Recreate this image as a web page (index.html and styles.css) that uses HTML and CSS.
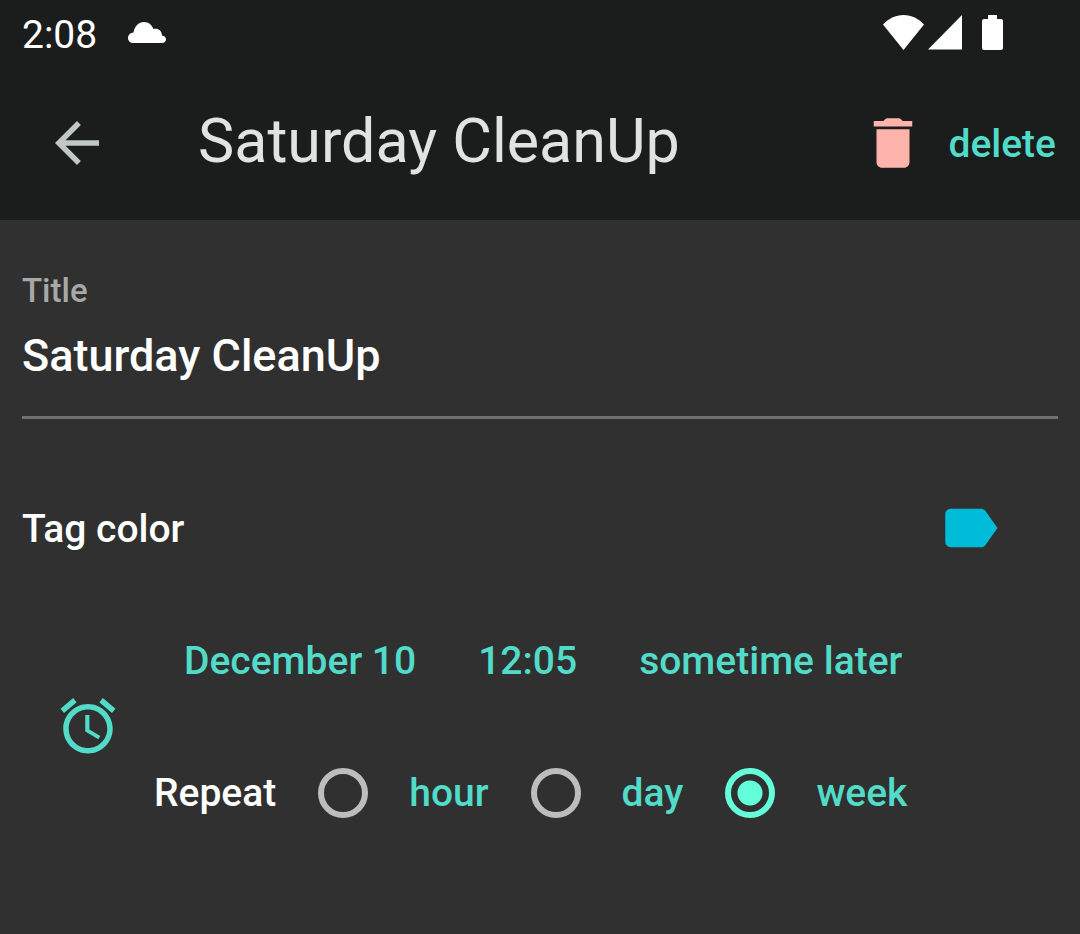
FILE: index.html
```html
<!DOCTYPE html>
<html lang="en">
<head>
<meta charset="utf-8">
<meta name="viewport" content="width=device-width, initial-scale=1">
<title>Saturday CleanUp</title>
<link rel="stylesheet" href="styles.css">
</head>
<body>
<header class="top">
  <div class="status">
    <span class="clock">2:08</span>
    <svg class="cloud" viewBox="0 0 38 21" aria-hidden="true"><path d="M5 21C2.200 21 0 18.800 0 16C0 13.200 2.300 10.600 5.500 10.500C6.500 4.500 10.500 0 16 0C20.500 0 24 2.800 25.400 7C30.500 6.200 33.800 9 34 13.500C36.500 13.800 38 15.300 38 17.300C38 19.400 36.300 21 34 21Z"/></svg>
    <div class="signals">
      <svg class="wifi" viewBox="0 0 41 35" aria-hidden="true"><path d="M0 9.500C5.500 3.700 12.500 0 20.500 0S35.500 3.700 41 9.500L20.500 35Z"/></svg>
      <svg class="cell" viewBox="0 0 35 35" aria-hidden="true"><path d="M34 0V34.500H0Z"/></svg>
      <svg class="battery" viewBox="0 0 21 36" aria-hidden="true"><path d="M6 1H15V5H19Q21 5 21 7V34Q21 36 19 36H2Q0 36 0 34V7Q0 5 2 5H6Z"/></svg>
    </div>
  </div>
  <div class="appbar">
    <button class="icon-button back" type="button" aria-label="Back">
      <svg class="icon" viewBox="0 0 24 24" aria-hidden="true"><path d="M20 11H7.830l5.590-5.590L12 4l-8 8 8 8 1.410-1.410L7.830 13H20v-2z"/></svg>
    </button>
    <h1 class="heading">Saturday CleanUp</h1>
    <button class="delete" type="button">
      <svg class="icon bin" viewBox="0 0 24 24" aria-hidden="true"><path d="M6 19c0 1.100.9 2 2 2h8c1.100 0 2-.9 2-2V7H6v12zM19 4h-3.500l-.71-.71c-.18-.18-.44-.29-.7-.29H9.910c-.26 0-.52.11-.7.290L8.500 4H5v2h14V4z"/></svg>
      <span class="delete-text">delete</span>
    </button>
  </div>
</header>
<main class="form">
  <div class="field">
    <label class="field-label" for="title">Title</label>
    <input class="field-input" id="title" type="text" value="Saturday CleanUp">
  </div>
  <div class="tag-row">
    <span class="tag-label" id="tag-label">Tag color</span>
    <button class="icon-button tag" type="button" aria-labelledby="tag-label">
      <svg class="icon" viewBox="0 0 24 24" aria-hidden="true"><path d="M17.630 5.840C17.270 5.330 16.670 5 16 5L5 5.010C3.900 5.010 3 5.900 3 7v10c0 1.100.9 1.990 2 1.990L16 19c.67 0 1.270-.33 1.630-.84L22 12l-4.370-6.160z"/></svg>
    </button>
  </div>
  <div class="reminder">
    <svg class="icon alarm" viewBox="0 0 24 24" aria-hidden="true"><path d="M22 5.720l-4.600-3.860-1.290 1.530 4.600 3.860L22 5.720zM7.880 3.390L6.600 1.860 2 5.710l1.290 1.530 4.590-3.850zM12.500 8H11v6l4.750 2.850.75-1.230-4-2.370V8zM12 4c-4.970 0-9 4.030-9 9s4.020 9 9 9c4.970 0 9-4.030 9-9s-4.030-9-9-9zm0 16c-3.870 0-7-3.130-7-7s3.130-7 7-7 7 3.130 7 7-3.130 7-7 7z"/></svg>
    <div class="schedule">
      <div class="when">
        <button class="link" type="button">December 10</button>
        <button class="link" type="button">12:05</button>
        <button class="link" type="button">sometime later</button>
      </div>
      <div class="repeat" role="radiogroup" aria-labelledby="repeat-label">
        <span id="repeat-label">Repeat</span>
        <label class="option"><input class="radio" type="radio" name="repeat">hour</label>
        <label class="option"><input class="radio" type="radio" name="repeat">day</label>
        <label class="option"><input class="radio" type="radio" name="repeat" checked>week</label>
      </div>
    </div>
  </div>
</main>
</body>
</html>
```
FILE: styles.css
```css
* { box-sizing: border-box; }
body {
  margin: 0;
  min-height: 100vh;
  background: #303030;
  color: #fff;
  font: 500 39px/44px Roboto, sans-serif;
}
button {
  padding: 0;
  border: 0;
  background: none;
  color: #52dbc9;
  font: inherit;
}
svg { display: block; flex: none; fill: currentColor; }
.icon { width: 66px; height: 66px; }
.icon-button { flex: none; }

.top { background: #1b1d1c; }
.status {
  display: flex;
  align-items: center;
  height: 66px;
  padding: 0 77px 2px 22px;
}
.clock { font-weight: 400; padding-top: 6px; }
.cloud { width: 38px; height: 21px; margin-left: 31px; }
.signals { display: flex; align-items: center; margin-left: auto; }
.wifi { width: 41px; height: 35px; margin-right: 4px; }
.cell { width: 35px; height: 35px; margin-right: 19px; }
.battery { width: 21px; height: 36px; }

.appbar {
  display: flex;
  align-items: center;
  height: 154px;
  padding: 0 24px 0 44px;
}
.back { color: #bec9c6; }
.heading {
  flex: 1;
  margin: 0 0 4px 88px;
  color: #e0e3e1;
  font-size: 61px;
  font-weight: 400;
  line-height: 72px;
}
.delete { display: flex; align-items: center; gap: 22px; }
.delete-text { padding-top: 2px; }
.bin { color: #ffb4ab; }

.form { padding: 49px 22px 44px; }
.field { display: flex; flex-direction: column; gap: 15px; }
.field-label { color: #a8a8a8; font-size: 33px; }
.field-input {
  width: 100%;
  height: 91px;
  padding: 0 0 33px;
  border: 0;
  border-bottom: 3px solid #707070;
  outline: 0;
  background: none;
  color: inherit;
  font: inherit;
  font-size: 45px;
}
.tag-row {
  display: flex;
  align-items: center;
  justify-content: space-between;
  margin-top: 76px;
  padding-right: 55px;
}
.tag-label { padding-top: 2px; }
.tag { color: #00bcd8; }
.reminder {
  display: flex;
  align-items: center;
  gap: 33px;
  margin-top: 78px;
  padding-left: 33px;
}
.alarm { margin-bottom: 6px; color: #52dbc9; }
.schedule { display: flex; flex-direction: column; gap: 85px; }
.when { display: flex; gap: 62px; padding-left: 30px; }
.repeat { display: flex; align-items: center; gap: 42px; }
.option {
  display: flex;
  align-items: center;
  gap: 41px;
  color: #52dbc9;
}
.radio {
  appearance: none;
  width: 50px;
  height: 50px;
  margin: 0;
  border: 6px solid #bdbdbd;
  border-radius: 50%;
}
.radio:checked {
  border-color: #64ffda;
  background: radial-gradient(circle, #64ffda 12px, transparent 13px);
}
```
